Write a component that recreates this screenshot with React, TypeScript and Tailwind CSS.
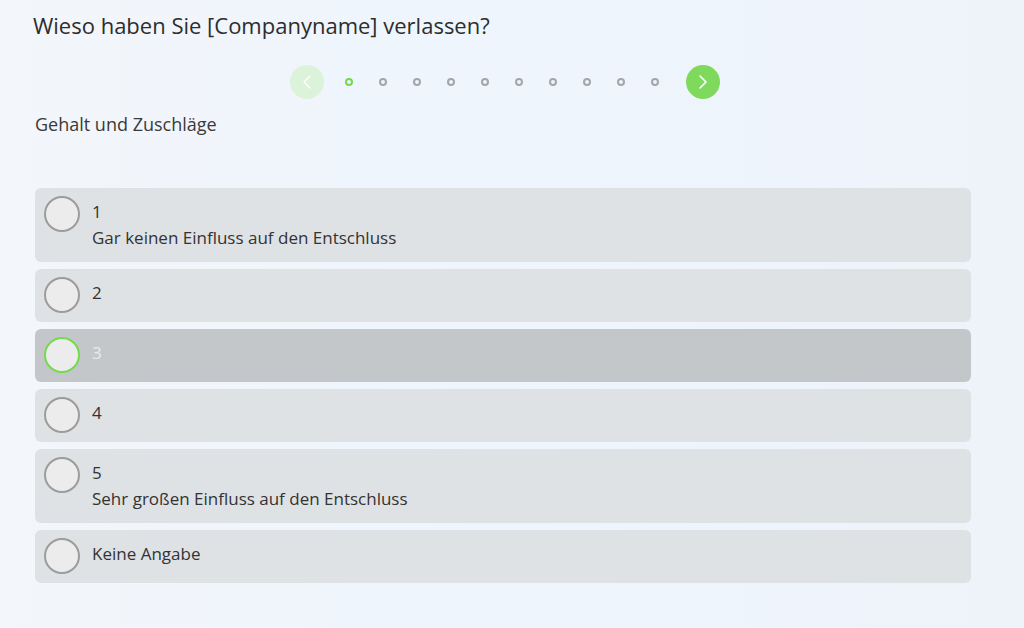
import { ChevronLeft, ChevronRight } from "lucide-react";

const options = [
  { id: 1, label: "1", sub: "Gar keinen Einfluss auf den Entschluss" },
  { id: 2, label: "2" },
  { id: 3, label: "3" },
  { id: 4, label: "4" },
  { id: 5, label: "5", sub: "Sehr großen Einfluss auf den Entschluss" },
  { id: 6, label: "Keine Angabe" },
];

export default function App() {
  const selected = 3;

  return (
    <div
      className="w-[1024px] h-[628px] overflow-hidden bg-gradient-to-r from-[#f3f6fa] via-[#eef5fd] to-[#eef3fa] text-[#333]"
      style={{ fontFamily: '"Open Sans", "Noto Sans", sans-serif' }}
    >
      <div className="pl-[33px] pr-[53px] pt-[10px]">
        {/* QUESTION */}
        <h1 className="text-[22px] leading-[30px] text-[#2d2d2d]">
          Wieso haben Sie [Companyname] verlassen?
        </h1>

        {/* PAGER */}
        <div className="flex items-center mt-[25px] ml-[257px]">
          <button className="w-[34px] h-[34px] rounded-full bg-[#dcf2d9] flex items-center justify-center text-white">
            <ChevronLeft size={24} strokeWidth={1.4} />
          </button>
          <div className="flex items-center gap-[26px] ml-[21px] mr-[27px]">
            {Array.from({ length: 10 }).map((_, i) => (
              <span
                key={i}
                className={
                  i === 0
                    ? "w-[8px] h-[8px] rounded-full border-2 border-[#74d84f]"
                    : "w-[8px] h-[8px] rounded-full border-2 border-[#a3a6a8]"
                }
              />
            ))}
          </div>
          <button className="w-[34px] h-[34px] rounded-full bg-[#7fd95c] flex items-center justify-center text-white">
            <ChevronRight size={24} strokeWidth={1.6} />
          </button>
        </div>

        {/* CATEGORY */}
        <p className="text-[18px] leading-[24px] text-[#3a3a3a] mt-[13px] ml-[2px]">
          Gehalt und Zuschläge
        </p>

        {/* OPTIONS */}
        <div className="mt-[52px] ml-[2px] flex flex-col gap-[7px]">
          {options.map((o) => {
            const isSel = o.id === selected;
            return (
              <div
                key={o.id}
                className={
                  isSel
                    ? "flex items-start gap-[12px] rounded-[6px] bg-[#c3c7ca] pl-[9px] pr-4 pt-[8px] pb-[9px]"
                    : "flex items-start gap-[12px] rounded-[6px] bg-[#dfe2e5] pl-[9px] pr-4 pt-[8px] pb-[9px]"
                }
              >
                <span
                  className={
                    isSel
                      ? "shrink-0 w-[36px] h-[36px] rounded-full border-[2px] border-[#74da4e] bg-[#ececec]"
                      : "shrink-0 w-[36px] h-[36px] rounded-full border-[2px] border-[#9c9c9c] bg-[#ececec]"
                  }
                />
                <div
                  className={
                    isSel
                      ? "flex flex-col pt-[3px] pb-[2px] text-[17px] leading-[26px] text-[#e9ebec]"
                      : "flex flex-col pt-[3px] pb-[2px] text-[17px] leading-[26px] text-[#333]"
                  }
                >
                  <span>{o.label}</span>
                  {o.sub && <span>{o.sub}</span>}
                </div>
              </div>
            );
          })}
        </div>
      </div>
    </div>
  );
}
